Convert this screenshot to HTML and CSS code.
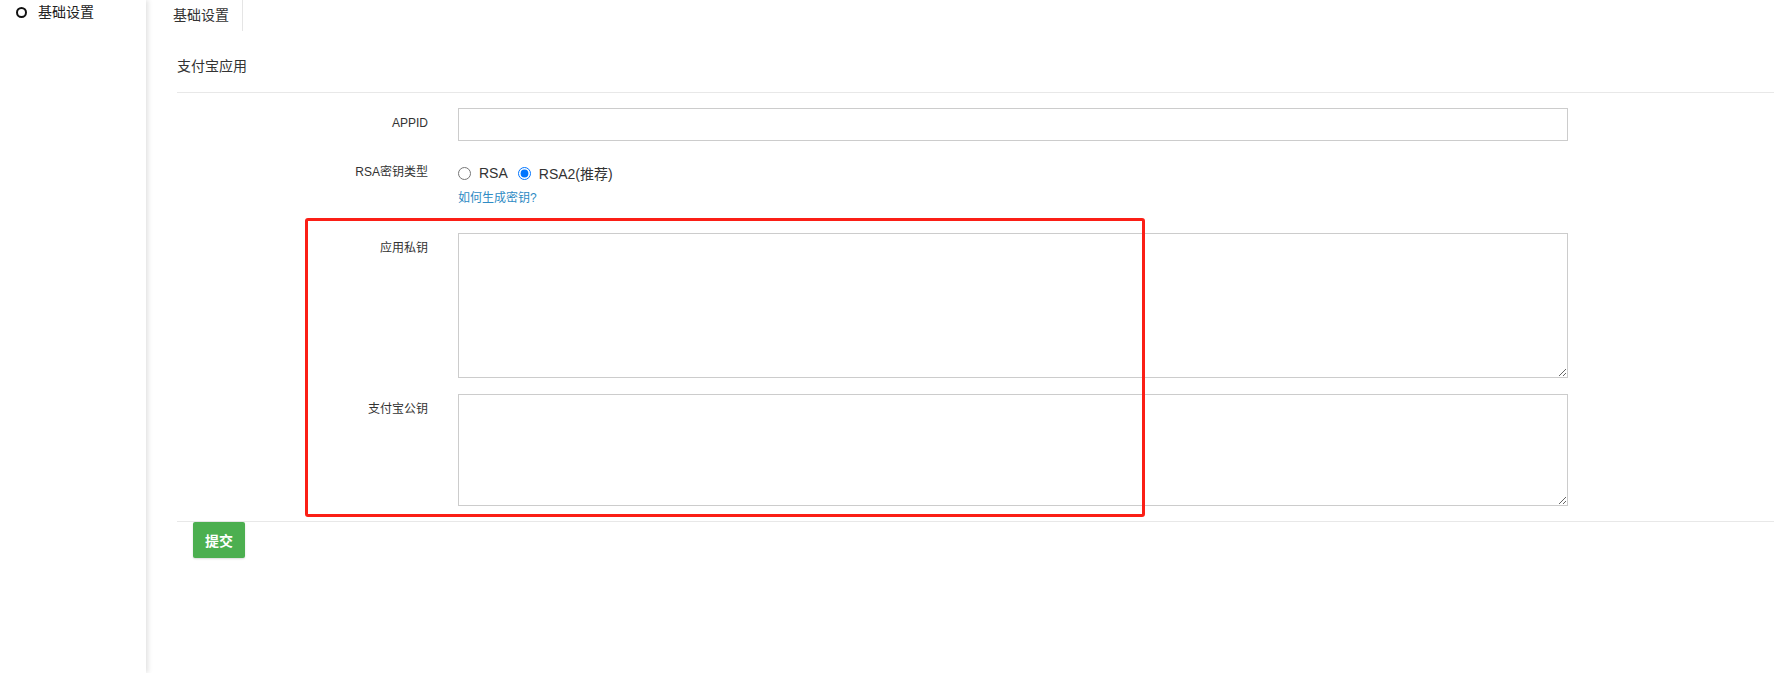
FILE: index.html
```html
<!DOCTYPE html>
<html lang="zh-CN">
<head>
    <meta charset="UTF-8">
    <meta name="viewport" content="width=device-width, initial-scale=1.0">
    <title>基础设置</title>
    <link rel="stylesheet" href="styles.css">
</head>
<body>
    <div class="sidebar">
        <div class="side-item"><span class="dot"></span>基础设置</div>
    </div>
    <div class="main">
        <div class="tabs">
            <div class="tab">基础设置</div>
        </div>
        <div class="panel">
            <div class="panel-title">支付宝应用</div>
            <form class="form">
                <div class="row">
                    <label class="label">APPID</label>
                    <input type="text" class="field">
                </div>
                <div class="row row-rsa">
                    <label class="label">RSA密钥类型</label>
                    <div class="radios">
                        <div class="radio-line">
                            <label class="radio"><input type="radio" name="rsa">RSA</label>
                            <label class="radio"><input type="radio" name="rsa" checked>RSA2(推荐)</label>
                        </div>
                        <a class="help" href="#">如何生成密钥?</a>
                    </div>
                </div>
                <div class="row row-key">
                    <label class="label">应用私钥</label>
                    <textarea class="field area-private"></textarea>
                </div>
                <div class="row row-pub">
                    <label class="label">支付宝公钥</label>
                    <textarea class="field area-public"></textarea>
                </div>
                <div class="actions">
                    <button type="button" class="btn-submit">提交</button>
                </div>
                <div class="mark"></div>
            </form>
        </div>
    </div>
</body>
</html>
```

FILE: styles.css
```css
body {
    margin: 0;
    display: flex;
    min-height: 100vh;
    background-color: #fff;
    color: #333;
    font-family: "Liberation Sans", Arial, "Noto Sans CJK SC", sans-serif;
}
.sidebar {
    width: 146px;
    min-height: 100vh;
    background-color: #fff;
    box-shadow: 2px 0 5px rgba(0, 0, 0, 0.12);
    position: relative;
    z-index: 1;
}
.side-item {
    display: flex;
    align-items: center;
    padding: 2px 0 0 16px;
    line-height: 20px;
    font-size: 14px;
    color: #222;
}
.dot {
    width: 7px;
    height: 7px;
    border: 2px solid #111;
    border-radius: 50%;
    margin-right: 11px;
}
.main {
    flex: 1;
}
.tabs {
    display: flex;
    padding-left: 15px;
}
.tab {
    height: 31px;
    line-height: 31px;
    padding: 0 13px 0 12px;
    font-size: 14px;
    border-right: 1px solid #e5e5e5;
}
.panel {
    margin: 0 7px 0 31px;
}
.panel-title {
    font-size: 14px;
    line-height: 20px;
    padding: 25px 0 16px;
    border-bottom: 1px solid #e8e8e8;
}
.form {
    position: relative;
    padding-top: 1px;
}
.row {
    display: grid;
    grid-template-columns: 251px 1110px;
    column-gap: 30px;
    margin-top: 15px;
}
.row:first-child {
    margin-top: 14px;
}
.row-rsa {
    margin-top: 16px;
}
.row-key {
    margin-top: 25px;
}
.row-pub {
    margin-top: 16px;
}
.label {
    text-align: right;
    font-size: 12px;
    line-height: 20px;
    padding-top: 5px;
}
.field {
    box-sizing: border-box;
    border: 1px solid #ccc;
    border-radius: 0;
    margin: 0;
    padding: 6px 8px;
    font-family: inherit;
    font-size: 13px;
    outline: none;
}
input.field {
    height: 33px;
}
.area-private {
    height: 145px;
}
.area-public {
    height: 112px;
}
.radios {
    padding-top: 6px;
}
.radio-line {
    display: flex;
    align-items: center;
    height: 20px;
    font-size: 14px;
}
.radio {
    display: flex;
    align-items: center;
    margin-right: 10px;
}
.radio input {
    width: 13px;
    height: 13px;
    margin: 0 8px 0 0;
}
.help {
    display: block;
    margin-top: 5px;
    font-size: 12px;
    line-height: 20px;
    color: #2f8bc4;
    text-decoration: none;
}
.actions {
    margin-top: 15px;
    border-top: 1px solid #e8e8e8;
    padding-left: 16px;
}
.btn-submit {
    width: 52px;
    height: 36px;
    border: none;
    border-radius: 2px;
    background-color: #4caf50;
    box-shadow: 0 1px 2px rgba(0, 0, 0, 0.15);
    color: #fff;
    font-family: inherit;
    font-size: 14px;
    font-weight: bold;
    cursor: pointer;
}
.mark {
    position: absolute;
    left: 128px;
    top: 125px;
    width: 834px;
    height: 293px;
    border: 3px solid #fb1f16;
    border-radius: 3px;
    pointer-events: none;
}
```
